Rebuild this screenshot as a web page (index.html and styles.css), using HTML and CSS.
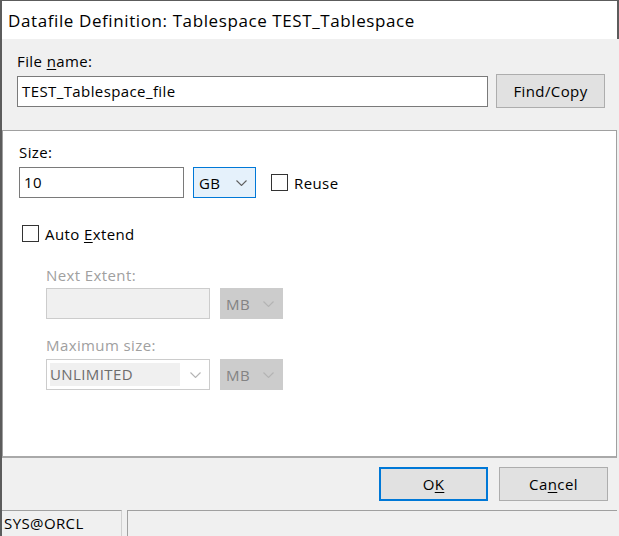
FILE: index.html
```html
<!DOCTYPE html>
<html>
<head>
  <link rel="stylesheet" href="styles.css">
</head>
<body>
  <div class="window">
    <div class="titlebar">Datafile Definition: Tablespace TEST_Tablespace</div>

    <div class="file-section">
      <div class="label">File <u>n</u>ame:</div>
      <div class="row">
        <div class="textbox file-name">TEST_Tablespace_file</div>
        <div class="button">Find/Copy</div>
      </div>
    </div>

    <div class="panel">
      <div class="label">Size:</div>
      <div class="row size-row">
        <div class="textbox size">10</div>
        <div class="combo focused">
          <span>GB</span>
          <svg class="chevron" width="11" height="6" viewBox="0 0 11 6"><path d="M0.5 0.5 L5.5 5.5 L10.5 0.5" fill="none" stroke="#5f5f5f" stroke-width="1.1"/></svg>
        </div>
        <div class="check reuse"><span class="box"></span><span>Reuse</span></div>
      </div>

      <div class="check auto"><span class="box"></span><span>Auto <u>E</u>xtend</span></div>

      <div class="extend">
        <div class="label disabled next-label">Next Extent:</div>
        <div class="row">
          <div class="textbox disabled extent"></div>
          <div class="combo disabled">
            <span>MB</span>
            <svg class="chevron" width="11" height="6" viewBox="0 0 11 6"><path d="M0.5 0.5 L5.5 5.5 L10.5 0.5" fill="none" stroke="#b4b4b4" stroke-width="1.1"/></svg>
          </div>
        </div>
        <div class="label disabled max-label">Maximum size:</div>
        <div class="row max-row">
          <div class="editcombo">
            <span class="edit">UNLIMITED</span>
            <svg class="chevron" width="11" height="6" viewBox="0 0 11 6"><path d="M0.5 0.5 L5.5 5.5 L10.5 0.5" fill="none" stroke="#b4b4b4" stroke-width="1.1"/></svg>
          </div>
          <div class="combo disabled">
            <span>MB</span>
            <svg class="chevron" width="11" height="6" viewBox="0 0 11 6"><path d="M0.5 0.5 L5.5 5.5 L10.5 0.5" fill="none" stroke="#b4b4b4" stroke-width="1.1"/></svg>
          </div>
        </div>
      </div>
    </div>

    <div class="actions">
      <div class="button default">O<u>K</u></div>
      <div class="button">Ca<u>n</u>cel</div>
    </div>

    <div class="statusbar">
      <div class="pane first">SYS@ORCL</div>
      <div class="pane rest"></div>
    </div>
  </div>
</body>
</html>
```

FILE: styles.css
```css
body {
  margin: 0;
  font-family: "Open Sans", "Noto Sans", sans-serif;
  font-size: 15px;
  letter-spacing: 0.4px;
  color: #000;
}

.window {
  width: 619px;
  height: 536px;
  box-sizing: border-box;
  border-left: 2px solid #5c5c5c;
  background-color: #f0f0f0;
  display: flex;
  flex-direction: column;
  overflow: hidden;
}

.titlebar {
  height: 39px;
  box-sizing: border-box;
  border-top: 1px solid #5c5c5c;
  border-right: 2px solid #5c5c5c;
  background-color: #fff;
  padding-left: 6px;
  display: flex;
  align-items: center;
  font-size: 17px;
  letter-spacing: 0.6px;
}

.label {
  height: 20px;
  line-height: 20px;
}

.label.disabled {
  color: #a0a0a0;
}

.row {
  display: flex;
  align-items: center;
}

u {
  text-decoration-thickness: 1px;
  text-underline-offset: 2px;
}

/* file name section */

.file-section {
  height: 91px;
  box-sizing: border-box;
  padding: 12px 0 0 15px;
}

.file-section .row {
  margin-top: 3px;
}

.textbox {
  height: 31px;
  box-sizing: border-box;
  border: 1px solid #7a7a7a;
  background-color: #fff;
  padding-left: 4px;
  line-height: 29px;
}

.textbox.file-name {
  width: 471px;
}

.button {
  width: 109px;
  height: 34px;
  box-sizing: border-box;
  border: 1px solid #adadad;
  background-color: #e1e1e1;
  display: flex;
  align-items: center;
  justify-content: center;
}

.file-section .button {
  margin-left: 8px;
}

/* main panel */

.panel {
  height: 328px;
  box-sizing: border-box;
  margin-right: 2px;
  border: 1px solid #a0a0a0;
  border-bottom: 2px solid #a9a9a9;
  background-color: #fff;
  padding: 11px 0 0 16px;
}

.size-row {
  margin-top: 5px;
}

.textbox.size {
  width: 165px;
}

.combo {
  width: 63px;
  height: 31px;
  box-sizing: border-box;
  border: 1px solid #cccccc;
  background-color: #cccccc;
  padding: 0 8px 0 5px;
  display: flex;
  align-items: center;
  justify-content: space-between;
}

.combo.focused {
  margin-left: 9px;
  border-color: #0078d7;
  background-color: #e5f1fb;
}

.combo.disabled {
  margin-left: 10px;
  color: #838383;
}

.check {
  display: flex;
  align-items: center;
  gap: 6px;
}

.box {
  width: 17px;
  height: 17px;
  box-sizing: border-box;
  border: 1px solid #333;
  background-color: #fff;
}

.check.reuse {
  margin-left: 15px;
}

.check.auto {
  margin: 27px 0 0 3px;
  height: 17px;
}

.extend {
  margin-left: 27px;
}

.next-label {
  margin-top: 23px;
}

.extend .row {
  margin-top: 3px;
}

.textbox.disabled {
  border-color: #cccccc;
  background-color: #f0f0f0;
}

.textbox.extent {
  width: 164px;
}

.max-label {
  margin-top: 16px;
}

.extend .max-row {
  margin-top: 4px;
}

.editcombo {
  width: 164px;
  height: 31px;
  box-sizing: border-box;
  border: 1px solid #cccccc;
  background-color: #fff;
  padding: 3px 8px 3px 3px;
  display: flex;
  align-items: center;
  justify-content: space-between;
}

.editcombo .edit {
  width: 130px;
  height: 23px;
  line-height: 23px;
  background-color: #f0f0f0;
  color: #6d6d6d;
}

/* buttons and status bar */

.actions {
  height: 52px;
  box-sizing: border-box;
  padding-right: 11px;
  display: flex;
  align-items: center;
  justify-content: flex-end;
  gap: 11px;
}

.button.default {
  border: 2px solid #0078d7;
}

.statusbar {
  flex: 1;
  display: flex;
}

.pane {
  box-sizing: border-box;
  border-top: 1px solid #a0a0a0;
}

.pane.first {
  width: 120px;
  border-right: 1px solid #d0d0d0;
  padding-left: 2px;
  line-height: 24px;
}

.pane.rest {
  flex: 1;
  margin-left: 5px;
  border-left: 1px solid #a0a0a0;
  margin-right: 2px;
}
```
